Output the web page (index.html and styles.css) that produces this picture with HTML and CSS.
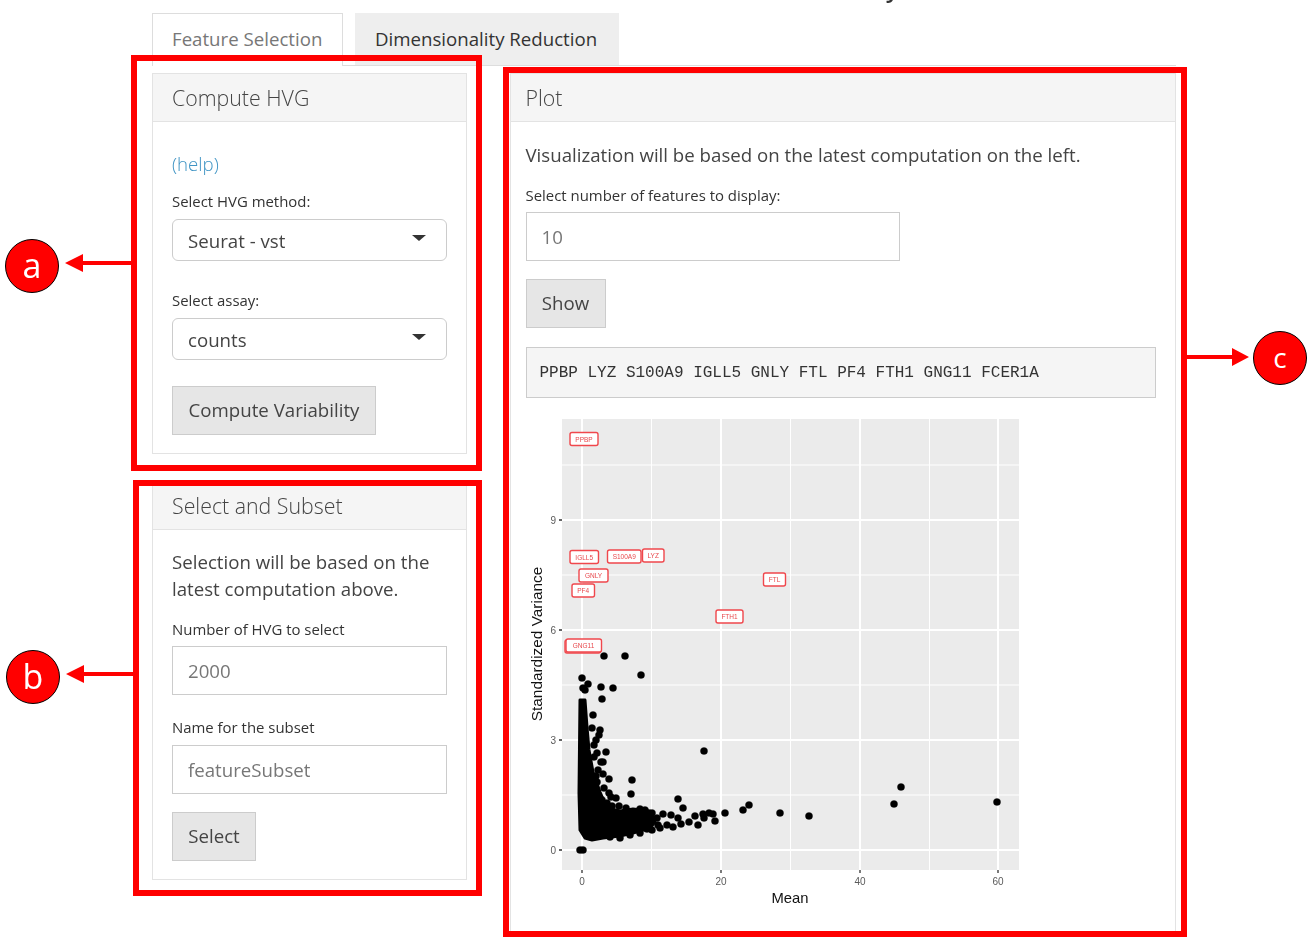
FILE: index.html
```html
<!DOCTYPE html>
<html lang="en">
<head>
    <meta charset="UTF-8">
    <title>Feature Selection</title>
    <link rel="stylesheet" href="styles.css">
</head>
<body>
    <div class="page">
        <ul class="tabs">
            <li class="tab active">Feature Selection</li>
            <li class="tab">Dimensionality Reduction</li>
        </ul>

        <div class="columns">
            <div class="col-left">
                <section class="panel panel-hvg">
                    <h3 class="panel-title">Compute HVG</h3>
                    <div class="panel-body">
                        <a class="help" href="#">(help)</a>
                        <label class="field-label first">Select HVG method:</label>
                        <div class="select-box">Seurat - vst<span class="caret"></span></div>
                        <label class="field-label second">Select assay:</label>
                        <div class="select-box">counts<span class="caret"></span></div>
                        <button class="btn btn-compute">Compute Variability</button>
                    </div>
                </section>

                <section class="panel panel-subset">
                    <h3 class="panel-title">Select and Subset</h3>
                    <div class="panel-body">
                        <p class="note">Selection will be based on the latest computation above.</p>
                        <label class="field-label">Number of HVG to select</label>
                        <input class="text-input" type="text" value="2000">
                        <label class="field-label third">Name for the subset</label>
                        <input class="text-input" type="text" value="featureSubset">
                        <button class="btn btn-select">Select</button>
                    </div>
                </section>
            </div>

            <section class="panel panel-plot">
                <h3 class="panel-title">Plot</h3>
                <div class="panel-body">
                    <p class="note">Visualization will be based on the latest computation on the left.</p>
                    <label class="field-label">Select number of features to display:</label>
                    <input class="text-input input-short" type="text" value="10">
                    <button class="btn btn-show">Show</button>
                    <pre class="output">PPBP LYZ S100A9 IGLL5 GNLY FTL PF4 FTH1 GNG11 FCER1A</pre>

                    <!-- viewBox follows page coordinates, easier to compare with the picture -->
                    <svg class="plot" viewBox="526 412 500 510" width="500" height="510">
                        <rect x="562" y="419" width="457" height="451" fill="#ebebeb"/>
                        <g stroke="#fff" stroke-width="1">
                            <path d="M562 795H1019M562 685H1019M562 575H1019M562 465H1019M651.500 419V870M790.500 419V870M929.500 419V870"/>
                        </g>
                        <g stroke="#fff" stroke-width="2">
                            <path d="M562 850H1019M562 740H1019M562 630H1019M562 520H1019M582 419V870M721 419V870M860 419V870M998 419V870"/>
                        </g>
                        <g stroke="#333" stroke-width="1.300">
                            <path d="M559 850H562M559 740H562M559 630H562M559 520H562M582 870V873M721 870V873M860 870V873M998 870V873"/>
                        </g>

                        <g class="tick-text" text-anchor="end">
                            <text x="556" y="854">0</text>
                            <text x="556" y="744">3</text>
                            <text x="556" y="634">6</text>
                            <text x="556" y="524">9</text>
                        </g>
                        <g class="tick-text" text-anchor="middle">
                            <text x="582" y="885">0</text>
                            <text x="721" y="885">20</text>
                            <text x="860" y="885">40</text>
                            <text x="998" y="885">60</text>
                        </g>
                        <text class="axis-title" x="790" y="903" text-anchor="middle">Mean</text>
                        <text class="axis-title axis-y" transform="translate(542 644) rotate(-90)" text-anchor="middle">Standardized Variance</text>

                        <!-- dense part of the cloud -->
                        <path class="cloud" d="M580 700L585 700L587 727L589 750L593 772L600 792L607 808L620 811L633 809L650 811L655 822L650 828L633 833L620 836L603 838L592 840L585 838L580 830L579 793Z"/>
                        <g class="dots">
                            <circle cx="582" cy="678" r="3.600"/><circle cx="583" cy="688" r="3.600"/><circle cx="588" cy="684" r="3.600"/>
                            <circle cx="585" cy="690" r="3.600"/><circle cx="601" cy="687" r="3.600"/><circle cx="613" cy="688" r="3.600"/>
                            <circle cx="602" cy="699" r="3.600"/><circle cx="641" cy="675" r="3.600"/><circle cx="604" cy="656" r="3.600"/>
                            <circle cx="625" cy="656" r="3.600"/><circle cx="600" cy="730" r="3.600"/><circle cx="599" cy="735" r="3.600"/>
                            <circle cx="596" cy="740" r="3.600"/><circle cx="606" cy="752" r="3.600"/><circle cx="597" cy="753" r="3.600"/>
                            <circle cx="594" cy="757" r="3.600"/><circle cx="601" cy="762" r="3.600"/><circle cx="603" cy="762" r="3.600"/>
                            <circle cx="603" cy="774" r="3.600"/><circle cx="596" cy="776" r="3.600"/><circle cx="609" cy="779" r="3.600"/>
                            <circle cx="632" cy="780" r="3.600"/><circle cx="631" cy="794" r="3.600"/><circle cx="704" cy="751" r="3.600"/>
                            <circle cx="609" cy="793" r="3.600"/><circle cx="611" cy="797" r="3.600"/><circle cx="616" cy="798" r="3.600"/>
                            <circle cx="607" cy="803" r="3.600"/><circle cx="608" cy="807" r="3.600"/><circle cx="619" cy="806" r="3.600"/>
                            <circle cx="678" cy="799" r="3.600"/><circle cx="683" cy="808" r="3.600"/><circle cx="645" cy="810" r="3.600"/>
                            <circle cx="652" cy="813" r="3.600"/><circle cx="663" cy="814" r="3.600"/><circle cx="671" cy="815" r="3.600"/>
                            <circle cx="678" cy="818" r="3.600"/><circle cx="695" cy="816" r="3.600"/><circle cx="703" cy="814" r="3.600"/>
                            <circle cx="709" cy="813" r="3.600"/><circle cx="713" cy="814" r="3.600"/><circle cx="715" cy="821" r="3.600"/>
                            <circle cx="704" cy="818" r="3.600"/><circle cx="698" cy="825" r="3.600"/><circle cx="689" cy="822" r="3.600"/>
                            <circle cx="681" cy="824" r="3.600"/><circle cx="673" cy="827" r="3.600"/><circle cx="667" cy="825" r="3.600"/>
                            <circle cx="658" cy="825" r="3.600"/><circle cx="652" cy="830" r="3.600"/><circle cx="657" cy="818" r="3.600"/>
                            <circle cx="645" cy="820" r="3.600"/><circle cx="637" cy="817" r="3.600"/><circle cx="627" cy="812" r="3.600"/>
                            <circle cx="633" cy="813" r="3.600"/><circle cx="725" cy="813" r="3.600"/><circle cx="743" cy="810" r="3.600"/>
                            <circle cx="749" cy="805" r="3.600"/><circle cx="780" cy="813" r="3.600"/><circle cx="809" cy="816" r="3.600"/>
                            <circle cx="894" cy="804" r="3.600"/><circle cx="901" cy="787" r="3.600"/><circle cx="997" cy="802" r="3.600"/>
                            <circle cx="580" cy="850" r="3.600"/><circle cx="583" cy="850" r="3.600"/>
                            <circle cx="594" cy="745" r="3.600"/><circle cx="592" cy="728" r="3.600"/><circle cx="598" cy="770" r="3.600"/>
                            <circle cx="604" cy="788" r="3.600"/><circle cx="612" cy="806" r="3.600"/><circle cx="640" cy="833" r="3.600"/>
                            <circle cx="630" cy="835" r="3.600"/><circle cx="660" cy="828" r="3.600"/><circle cx="647" cy="829" r="3.600"/>
                            <circle cx="626" cy="808" r="3.600"/><circle cx="640" cy="809" r="3.600"/><circle cx="593" cy="715" r="3.600"/>
                            <circle cx="597" cy="782" r="3.600"/><circle cx="602" cy="800" r="3.600"/><circle cx="610" cy="837" r="3.600"/>
                            <circle cx="620" cy="838" r="3.600"/>
                        </g>

                        <g class="gene-labels">
                            <rect x="570" y="432.500" width="28" height="13" rx="2"/>
                            <rect x="570" y="550.500" width="28.500" height="13" rx="2"/>
                            <rect x="607.500" y="550" width="33.500" height="13" rx="2"/>
                            <rect x="642.500" y="549" width="21.500" height="13" rx="2"/>
                            <rect x="579" y="569" width="29" height="13" rx="2"/>
                            <rect x="572" y="584" width="22.500" height="13" rx="2"/>
                            <rect x="763.500" y="573" width="22" height="13" rx="2"/>
                            <rect x="716" y="610" width="27" height="13" rx="2"/>
                            <rect x="565" y="640" width="35.500" height="13" rx="2"/>
                            <rect x="566" y="639" width="35.500" height="13" rx="2"/>
                        </g>
                        <g class="gene-text" text-anchor="middle">
                            <text x="584" y="441.500">PPBP</text>
                            <text x="584.200" y="559.500">IGLL5</text>
                            <text x="624.200" y="559">S100A9</text>
                            <text x="653.200" y="558">LYZ</text>
                            <text x="593.500" y="578">GNLY</text>
                            <text x="583.200" y="593">PF4</text>
                            <text x="774.500" y="582">FTL</text>
                            <text x="729.500" y="619">FTH1</text>
                            <text x="583.500" y="648">GNG11</text>
                        </g>
                    </svg>
                </div>
            </section>
        </div>
    </div>

    <!-- annotations drawn over the screenshot -->
    <div class="clipped-title">y</div>
    <div class="mark-box box-a"></div>
    <div class="mark-box box-b"></div>
    <div class="mark-box box-c"></div>

    <svg class="arrow arrow-a" width="68" height="20" viewBox="0 0 68 20"><path d="M0 10L18 1V8H68V12H18V19Z" fill="#f00"/></svg>
    <svg class="arrow arrow-b" width="68" height="20" viewBox="0 0 68 20"><path d="M0 10L18 1V8H68V12H18V19Z" fill="#f00"/></svg>
    <svg class="arrow arrow-c" width="62" height="20" viewBox="0 0 62 20"><path d="M62 10L45 1V8H0V12H45V19Z" fill="#f00"/></svg>

    <div class="mark-dot dot-a">a</div>
    <div class="mark-dot dot-b">b</div>
    <div class="mark-dot dot-c">c</div>
</body>
</html>
```

FILE: styles.css
```css
* {
    box-sizing: border-box;
}
body {
    margin: 0;
    font-family: 'Open Sans', sans-serif;
    color: #444;
    background: #fff;
    overflow: hidden;
}
/* the reference is a slightly resampled screenshot */
.page {
    width: 1176px;
    padding: 13px 0 0 152px;
    filter: blur(0.3px);
}

/* tabs */
.tabs {
    display: flex;
    gap: 12px;
    margin: 0;
    padding: 0;
    list-style: none;
    height: 53px;
    border-bottom: 1.5px solid #ddd;
}
.tab {
    padding: 13px 22px 0 20px;
    font-size: 18.670px;
    line-height: 25px;
    height: 52px;
    background: #eee;
    color: #333;
}
.active {
    width: 191px;
    height: 53px;
    background: #fff;
    color: #777;
    border: 1.5px solid #ddd;
    border-bottom: none;
    padding: 12px 19px 0;
}

.columns {
    display: flex;
    gap: 43px;
    margin-top: 7px;
}
.col-left {
    width: 315px;
}

/* panels */
.panel {
    border: 1.5px solid #e3e3e3;
    background: #fff;
}
.panel-hvg {
    height: 381px;
}
.panel-subset {
    height: 399px;
    margin-top: 27px;
}
.panel-plot {
    width: 666px;
    height: 862px;
}
.panel-title {
    margin: 0;
    height: 48px;
    padding: 0 19px;
    font-size: 21.330px;
    font-weight: 300;
    line-height: 47px;
    color: #444;
    background: #f5f5f5;
    border-bottom: 1.5px solid #e3e3e3;
}
.panel-body {
    padding: 0 19px;
}
.panel-plot .panel-title {
    padding-left: 14.500px;
}
.panel-plot .panel-body {
    padding: 0 19.500px 0 14.500px;
}
.panel-plot .note {
    margin-top: 19px;
    margin-bottom: 17px;
}
.help {
    display: block;
    margin-top: 28px;
    font-size: 18.670px;
    font-weight: 300;
    line-height: 28px;
    color: #3f94c4;
    text-decoration: none;
}
.field-label {
    display: block;
    font-size: 14.930px;
    line-height: 20px;
    color: #333;
}
.first {
    margin-top: 13px;
    margin-bottom: 8px;
}
.second {
    margin-top: 29px;
    margin-bottom: 8px;
}
.third {
    margin-top: 22px;
    margin-bottom: 8px;
}
.note {
    margin: 18px 0 17px;
    font-size: 18.670px;
    line-height: 27px;
    color: #444;
}

/* form controls */
.select-box {
    display: flex;
    align-items: center;
    justify-content: space-between;
    height: 42px;
    padding: 0 20px 0 15px;
    font-size: 18.670px;
    color: #444;
    border: 1.5px solid #ccc;
    border-radius: 6px;
}
.caret {
    width: 0;
    height: 0;
    margin-top: -4px;
    border-left: 7px solid transparent;
    border-right: 7px solid transparent;
    border-top: 6px solid #333;
}
.text-input {
    display: block;
    width: 100%;
    height: 49px;
    padding: 0 15px;
    font: 18.670px 'Open Sans', sans-serif;
    color: #777;
    background: #fff;
    border: 1.500px solid #ccc;
    border-radius: 0;
    margin-top: 7px;
}
.third + .text-input {
    margin-top: 0;
}
.input-short {
    width: 374px;
}
.btn {
    display: block;
    height: 49px;
    padding: 0 15px 2px;
    font: 18.670px 'Open Sans', sans-serif;
    color: #444;
    background: #e6e6e6;
    border: 1.500px solid #ccc;
    border-radius: 0;
}
.btn-compute {
    width: 204px;
    margin-top: 26px;
}
.btn-select {
    width: 84px;
    margin-top: 18px;
}
.btn-show {
    width: 80px;
    margin-top: 18px;
}
.output {
    height: 51px;
    margin: 19px 0 0;
    padding: 0 13px;
    font: 16px/50px 'Liberation Mono', monospace;
    color: #333;
    background: #f5f5f5;
    border: 1.500px solid #ccc;
}

/* plot */
.plot {
    display: block;
    margin-top: 14px;
    filter: blur(0.3px);
}
.tick-text text {
    font: 10px 'Liberation Sans', sans-serif;
    fill: #5a5a5a;
}
.axis-title {
    font: 14.800px 'Liberation Sans', sans-serif;
    fill: #111;
}
.axis-y {
    font-size: 15.400px;
}
.cloud {
    fill: #000;
    stroke: #000;
    stroke-width: 3;
    stroke-linejoin: round;
}
.dots {
    fill: #000;
    stroke: #000;
    stroke-width: 0.300;
}
.gene-labels rect {
    fill: #fff;
    stroke: #f0474c;
    stroke-width: 1.400;
}
.gene-text text {
    font: 6.500px 'Liberation Sans', sans-serif;
    fill: #e8484c;
}

/* red annotations */
.clipped-title {
    position: absolute;
    left: 886px;
    top: -24px;
    font-size: 24px;
    font-weight: 600;
    line-height: 24px;
    color: #333;
}
.mark-box {
    position: absolute;
    border: 6px solid #f00;
}
.box-a {
    left: 131px;
    top: 55px;
    width: 351px;
    height: 416px;
}
.box-b {
    left: 133px;
    top: 480px;
    width: 349px;
    height: 416px;
}
.box-c {
    left: 503px;
    top: 67px;
    width: 684px;
    height: 870px;
}
.arrow {
    position: absolute;
    display: block;
}
.arrow-a {
    left: 65px;
    top: 253px;
}
.arrow-b {
    left: 66px;
    top: 664px;
}
.arrow-c {
    left: 1187px;
    top: 347px;
}
.mark-dot {
    position: absolute;
    width: 54px;
    height: 54px;
    font-size: 34px;
    font-weight: 500;
    line-height: 50px;
    text-align: center;
    color: #fff;
    background: #f00;
    border: 1.500px solid #000;
    border-radius: 50%;
}
.dot-a {
    left: 5px;
    top: 239px;
}
.dot-b {
    left: 6px;
    top: 650px;
}
.dot-c {
    left: 1253px;
    top: 331px;
    font-size: 28px;
}
```
